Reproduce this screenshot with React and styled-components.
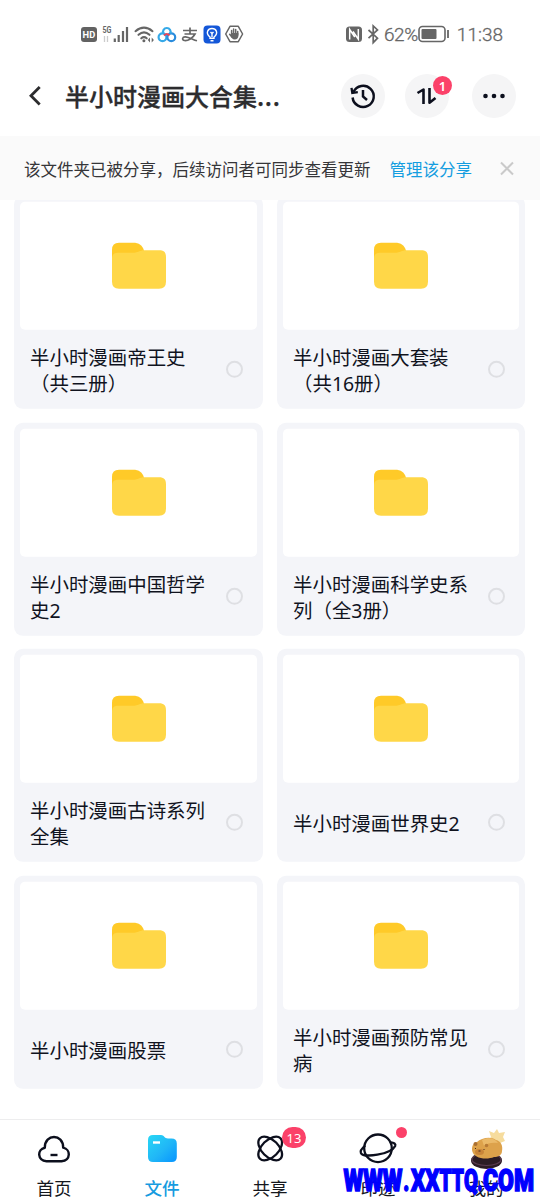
import styled, { createGlobalStyle, css } from "styled-components";

const folders = [
    ['半小时漫画帝王史', '（共三册）'],
    ['半小时漫画大套装', '（共16册）'],
    ['半小时漫画中国哲学', '史2'],
    ['半小时漫画科学史系', '列（全3册）'],
    ['半小时漫画古诗系列', '全集'],
    ['半小时漫画世界史2'],
    ['半小时漫画股票'],
    ['半小时漫画预防常见', '病'],
]

const GlobalStyle = createGlobalStyle`
    * {
        box-sizing: border-box;
    }
    body {
        margin: 0;
        background: #fff;
        font-family: "Noto Sans", "Noto Sans CJK SC", sans-serif;
        color: #0b1020;
    }
    svg {
        display: block;
        flex: none;
    }
`

const Screen = styled.div`
    position: relative;
    width: 540px;
    height: 1200px;
    display: flex;
    flex-direction: column;
    overflow: hidden;
    white-space: nowrap;
`

const StatusBar = styled.div`
    height: 68px;
    padding: 0 37px 0 80px;
    display: flex;
    justify-content: space-between;
    flex: none;
`

const StatusGroup = styled.div`
    display: flex;
    align-items: center;
    height: 68px;
    color: #666;
`

const StatusText = styled.span`
    font-family: Roboto, sans-serif;
    font-size: 19px;
    font-weight: 300;
    -webkit-text-stroke: .3px #666;
    letter-spacing: ${props => props.$spacing || '0'};
    margin-left: ${props => props.$left || '0'};
    line-height: 24px;
    padding-top: 2px;
`

const Header = styled.header`
    height: 68px;
    padding: 0 24px 12px 24px;
    display: flex;
    align-items: center;
    flex: none;
`

const Title = styled.h1`
    margin: 0 0 0 17px;
    width: 276px;
    font-size: 24px;
    line-height: 34px;
    font-weight: 500;
    font-family: "Noto Sans CJK SC", sans-serif;
    -webkit-text-stroke: .35px #2c2c2e;
    color: #2c2c2e;
    & span {
        letter-spacing: .7px;
    }
`

const RoundButton = styled.div`
    position: relative;
    width: 44px;
    height: 44px;
    border-radius: 50%;
    background: #f5f5f6;
    display: flex;
    align-items: center;
    justify-content: center;
    flex: none;
    & + & {
        margin-left: 20px;
    }
    & + & + & {
        margin-left: 23px;
    }
`

const Badge = styled.span`
    position: absolute;
    display: flex;
    align-items: center;
    justify-content: center;
    background: #fb4169;
    color: #fff;
    border-radius: 12px;
    font-family: "Noto Sans", sans-serif;
    ${props => props.$kind === 'sort' && css`
        left: 28px;
        top: 2px;
        width: 19px;
        height: 19px;
        font-size: 13px;
        font-weight: 600;
    `}
    ${props => props.$kind === 'count' && css`
        left: 282px;
        top: 7px;
        width: 24px;
        height: 21px;
        font-size: 13px;
    `}
    ${props => props.$kind === 'dot' && css`
        left: 396px;
        top: 7px;
        width: 11px;
        height: 11px;
    `}
`

const Banner = styled.div`
    height: 64px;
    padding: 1px 25px 0 24px;
    display: flex;
    align-items: center;
    flex: none;
    z-index: 1;
    background: #fafafa;
    color: #353538;
    font-size: 16.5px;
`

const BannerLink = styled.span`
    margin-left: 19px;
    margin-right: auto;
    color: #149de0;
    font-size: 16.5px;
`

const Grid = styled.main`
    flex: 1;
    min-height: 0;
    overflow: hidden;
    padding: 0 14px;
    display: grid;
    grid-template-columns: 249px 248px;
    grid-auto-rows: 213px;
    gap: 13.6px 14px;
    & > * {
        transform: translateY(-4.2px);
    }
`

const Card = styled.div`
    border-radius: 9px;
    background: #f4f5f9;
    padding: 6px;
    display: flex;
    flex-direction: column;
`

const Thumb = styled.div`
    height: 128px;
    border-radius: 5px;
    background: #fff;
    display: flex;
    align-items: center;
    justify-content: center;
    flex: none;
`

const CardFooter = styled.div`
    flex: 1;
    display: flex;
    align-items: center;
    justify-content: space-between;
    padding: 5px 14px 0 10px;
`

const Name = styled.div`
    font-size: 19.45px;
    line-height: 26px;
    color: #10131e;
    padding-top: 4px;
`

const Radio = styled.span`
    width: 17px;
    height: 17px;
    margin-top: 1px;
    border: 2px solid #dedfe3;
    border-radius: 50%;
    flex: none;
`

const NavBar = styled.nav`
    position: relative;
    height: 81px;
    border-top: 1px solid #ededee;
    display: grid;
    grid-template-columns: repeat(5, 108px);
    flex: none;
    background: #fff;
`

const NavItem = styled.div`
    display: flex;
    flex-direction: column;
    align-items: center;
    font-size: 17.6px;
    line-height: 24px;
    padding-top: 8px;
    gap: 6px;
    color: ${props => props.$active ? '#169be0' : '#15171d'};
    font-weight: ${props => props.$active ? 500 : 400};
`

const Watermark = styled.svg`
    position: absolute;
    left: 340px;
    top: 1160px;
    font-family: Roboto, sans-serif;
    font-size: 32px;
    font-weight: 900;
    fill: #0000fe;
    stroke: #0000fe;
    stroke-width: 1.6px;
`

// [text, x, width]
const watermarkParts = [
    ['WWW', 3.5, 59],
    ['.', 63.2, 6],
    ['XX', 71, 28.5],
    ['TT', 99.5, 24.5],
    ['Q', 124, 14],
    ['.', 137.5, 5],
    ['COM', 143, 51],
]

const SystemIcons = () => (
    <svg width="166" height="24" viewBox="80 22 166 24" fill="none" stroke="#666">
        <rect x="81" y="27" width="16" height="15" rx="3" fill="#626262" stroke="none"/>
        <text x="82.6" y="38" fontSize="9" fontWeight="700" fill="#fff" stroke="none" fontFamily="Roboto" textLength="12.6" lengthAdjust="spacingAndGlyphs">HD</text>
        <text x="102.5" y="32.5" fontSize="9" fontWeight="700" fill="#666" stroke="none" fontFamily="Roboto" textLength="9" lengthAdjust="spacingAndGlyphs">5G</text>
        <path d="M104.5 36v6M107.5 36v6" stroke="#ccc" strokeWidth="1.3"/>
        <path d="M113.3 38.5V42M117.2 35V42M121.5 31V42M125.5 27V42" strokeWidth="2.2" transform="translate(1.5 0)"/>
        <g transform="translate(.5 0)">
            <path d="M135 31.2q8.5-7 17 0M138 34.8q5.500-4.800 11 0M140.800 38.300q2.700-2.300 5.400 0" strokeWidth="2.1" strokeLinecap="round"/>
            <circle cx="143.400" cy="40.800" r="1.500" fill="#666" stroke="none"/>
            <path d="M149.500 37.500l-2.200 2.500 2.200 2.500zM151.200 37.500l2.200 2.500-2.200 2.500z" fill="#666" stroke="none"/>
        </g>
        <g strokeWidth="2.2">
            <circle cx="162.500" cy="37.200" r="3.900" stroke="#35a9e8"/>
            <circle cx="171.300" cy="37.200" r="3.900" stroke="#2a8cdd"/>
            <path d="M163.400 33.500a3.800 3.800 0 1 1 6.800 0" stroke="#35a9e8"/>
            <path d="M164 35.500q3-3 5.500 0" stroke="#e4475b"/>
        </g>
        <path d="M183 30.500h14M190 27.500v6M184.500 34h10.500c-2 4-7 7-10.500 6.500-3-.5-2.200-4 1-3.700 4 .4 7.500 3 11.500 4" strokeWidth="1.700"/>
        <rect x="203.500" y="25.500" width="17" height="18" rx="4" fill="#1457d8" stroke="none"/>
        <g stroke="#fff" strokeWidth="1.400">
            <path d="M210 38.200v-1.200c-5-4-2-8.500 2-8.500s7 4.500 2 8.500v1.200zM210.500 40.700h3M212 37v-3.500l-1.500-1.500M212 33.500l1.500-1.500"/>
        </g>
        <path d="M230 26.300h8.300l4.300 7.700-4.300 7.700H230l-4.300-7.700z" strokeWidth="1.500" strokeLinejoin="round"/>
        <path d="M231.600 34.500v-4M233.600 33.500v-4.500M235.700 33.500v-4M237.700 35v-3.500M229.600 34.300l2.500 3" strokeWidth="1.500" strokeLinecap="round"/>
        <path d="M231 33h7.400v3c0 2-1.500 3.400-3.700 3.400s-3.700-2-3.700-4z" fill="#666" stroke="none"/>
    </svg>
)

const NfcBluetooth = () => (
    <svg width="36" height="24" viewBox="344 22 36 24" fill="none">
        <rect x="344" y="26.500" width="16" height="15.500" rx="3.500" fill="#666"/>
        <path d="M347.700 39.500V29.500L352.800 37M356.300 29v10.200L351 31.500" stroke="#fff" strokeWidth="1.500"/>
        <path d="M366.500 30l9 8.200-4.300 4.500V26l4.300 4-9 8.200" stroke="#666" strokeWidth="1.700"/>
    </svg>
)

const Battery = () => (
    <svg width="32" height="18" viewBox="0 0 32 18" fill="none">
        <rect x="1" y="1.500" width="26" height="15" rx="3.500" stroke="#666" strokeWidth="1.600"/>
        <rect x="3.500" y="4" width="15" height="10" rx="1" fill="#666"/>
        <path d="M30 5v8" stroke="#666" strokeWidth="1.800"/>
    </svg>
)

const FolderIcon = () => (
    <svg width="54" height="48" viewBox="0 0 54 48">
        <path d="M0 8Q0 1 7 1h14c6 0 9.500 2.500 11 8v8H0z" fill="#ffca28"/>
        <path d="M0 17c0-4 2-6 6-6h15c5 0 7-2.500 11-2.500h15c5 0 7 2 7 7V40q0 7-7 7H7q-7 0-7-7z" fill="#ffd748"/>
    </svg>
)

const HomeIcon = () => (
    <svg width="32" height="42" viewBox="38 1128 32 42" fill="none" stroke="#0c0f1d" strokeWidth="2.400" strokeLinecap="round">
        <path d="M46.500 1161.300h15c9.500-.8 9.300-12 1.700-13.600 0-14.300-18.400-14.300-18.400 0-7.800 1.600-7.600 13 1.700 13.600z" strokeLinejoin="round"/>
        <path d="M50.500 1155h7" strokeLinecap="butt"/>
    </svg>
)

const FilesIcon = () => (
    <svg width="32" height="42" viewBox="146 1128 32 42">
        <defs>
            <linearGradient id="files" x1="0" y1="0" x2="1" y2="1">
                <stop offset="0" stopColor="#28d7f5"/>
                <stop offset=".55" stopColor="#20b6f7"/>
                <stop offset="1" stopColor="#0794ff"/>
            </linearGradient>
        </defs>
        <path d="M148 1140q0-5 5-5h8c3 0 3.500 3.500 7 3.500h3.500q5.300 0 5.300 5V1157q0 5-5 5H153q-5 0-5-5z" fill="url(#files)"/>
        <path d="M153 1142.500h7" stroke="#fff" strokeWidth="2.400"/>
    </svg>
)

const ShareIcon = () => (
    <svg width="32" height="42" viewBox="254 1128 32 42" fill="none" stroke="#0c0f1d" strokeWidth="2.300">
        <ellipse cx="270.200" cy="1148.500" rx="14.500" ry="8.400" transform="rotate(45 270.200 1148.500)"/>
        <ellipse cx="270.200" cy="1148.500" rx="14.500" ry="8.400" transform="rotate(-45 270.200 1148.500)"/>
    </svg>
)

const PlanetIcon = () => (
    <svg width="40" height="42" viewBox="358 1128 40 42" fill="none" stroke="#0c0f1d" strokeWidth="2.300" strokeLinecap="round">
        <circle cx="378" cy="1148.300" r="13.800"/>
        <path d="M364.700 1146.200c-3 2.500-4.500 5-3.800 6.700 2.500 5.500 30 1.500 34.300-7 .8-2-1.200-3.200-4.500-3.500"/>
    </svg>
)

const AvatarIcon = () => (
    <svg width="40" height="42" viewBox="466 1128 40 42">
        <path d="M487 1141l4-4-2-6 5 2 3-4 2 4 6-1-2 5 2 4-5 2-2 6-10-4z" fill="#f6dc9d"/>
        <ellipse cx="486.500" cy="1160.500" rx="15.500" ry="8.500" fill="#2c1c25"/>
        <ellipse cx="486.500" cy="1159.500" rx="14.500" ry="6" fill="none" stroke="#5c3d52" strokeWidth="1.200"/>
        <path d="M472 1150c0-4 1-7 5-8 4-4 14-6 19-2 5 1 7 6 6 11 0 4-4 6-8 6-7 3-21 2-22-7z" fill="#dda24b"/>
        <path d="M482 1140c6-3 13-2 16 3-5-1-11 0-14 3z" fill="#ebba69"/>
        <circle cx="475.500" cy="1144" r="2" fill="#aa7032"/>
        <circle cx="486.500" cy="1145.500" r="1.800" fill="#b77a35"/>
        <ellipse cx="479.500" cy="1152" rx="4.500" ry="3" fill="#c98539"/>
        <path d="M475 1148.500h1M483.500 1149.500h1M478.500 1151h2" stroke="#4b2c20" strokeWidth="1.200"/>
    </svg>
)

const App = () => (
    <Screen>
        <GlobalStyle/>
        <StatusBar>
            <StatusGroup>
                <SystemIcons/>
            </StatusGroup>
            <StatusGroup>
                <NfcBluetooth/>
                <StatusText $left="2px" $spacing="-.4px">62%</StatusText>
                <StatusGroup>
                    <Battery/>
                </StatusGroup>
                <StatusText $left="7px" $spacing="0">11:38</StatusText>
            </StatusGroup>
        </StatusBar>

        <Header>
            <svg width="24" height="24" viewBox="0 0 24 24" fill="none" stroke="#2c2c2e" strokeWidth="2.800">
                <path d="M15.700 3L7 11.800l8.700 8.700"/>
            </svg>
            <Title>半小时漫画大合集<span>...</span></Title>
            <RoundButton>
                <svg width="28" height="28" viewBox="0 0 28 28" fill="none" stroke="#0c0f1d" strokeWidth="2.500">
                    <path d="M4.500 10A10.600 10.600 0 1 1 3.600 15.500"/>
                    <path d="M2.500 5.800l.8 5.200 5.500-.8" strokeWidth="2.300"/>
                    <path d="M14 8v6.500l4 3.500"/>
                </svg>
            </RoundButton>
            <RoundButton>
                <svg width="24" height="24" viewBox="0 0 24 24" fill="none" stroke="#0c0f1d" strokeWidth="2.600">
                    <path d="M2.500 9L8.500 5.500V20M14.500 4v14.700L20.500 14" strokeLinejoin="round"/>
                </svg>
                <Badge $kind="sort">1</Badge>
            </RoundButton>
            <RoundButton>
                <svg width="24" height="24" viewBox="0 0 24 24" fill="#0c0f1d">
                    <circle cx="3.500" cy="12" r="2.300"/>
                    <circle cx="12" cy="12" r="2.300"/>
                    <circle cx="20.500" cy="12" r="2.300"/>
                </svg>
            </RoundButton>
        </Header>

        <Banner>
            <span>该文件夹已被分享，后续访问者可同步查看更新</span>
            <BannerLink>管理该分享</BannerLink>
            <svg width="16" height="16" viewBox="0 0 16 16" stroke="#cacaca" strokeWidth="2">
                <path d="M2 1.500l12 12M14 1.500l-12 12"/>
            </svg>
        </Banner>

        <Grid>
            {folders.map(lines => (
                <Card key={lines.join('')}>
                    <Thumb>
                        <FolderIcon/>
                    </Thumb>
                    <CardFooter>
                        <Name>
                            {lines.map(line => <div key={line}>{line}</div>)}
                        </Name>
                        <Radio/>
                    </CardFooter>
                </Card>
            ))}
        </Grid>

        <NavBar>
            <NavItem>
                <HomeIcon/>
                首页
            </NavItem>
            <NavItem $active>
                <FilesIcon/>
                文件
            </NavItem>
            <NavItem>
                <ShareIcon/>
                共享
            </NavItem>
            <NavItem>
                <PlanetIcon/>
                印迹
            </NavItem>
            <NavItem>
                <AvatarIcon/>
                我的
            </NavItem>
            <Badge $kind="count">13</Badge>
            <Badge $kind="dot"/>
        </NavBar>
        <Watermark width="200" height="40" viewBox="0 0 200 40">
            {watermarkParts.map(([text, x, width]) => (
                <text key={x} x={x} y="31.3" textLength={width} lengthAdjust="spacingAndGlyphs">{text}</text>
            ))}
        </Watermark>
    </Screen>
)

export default App
